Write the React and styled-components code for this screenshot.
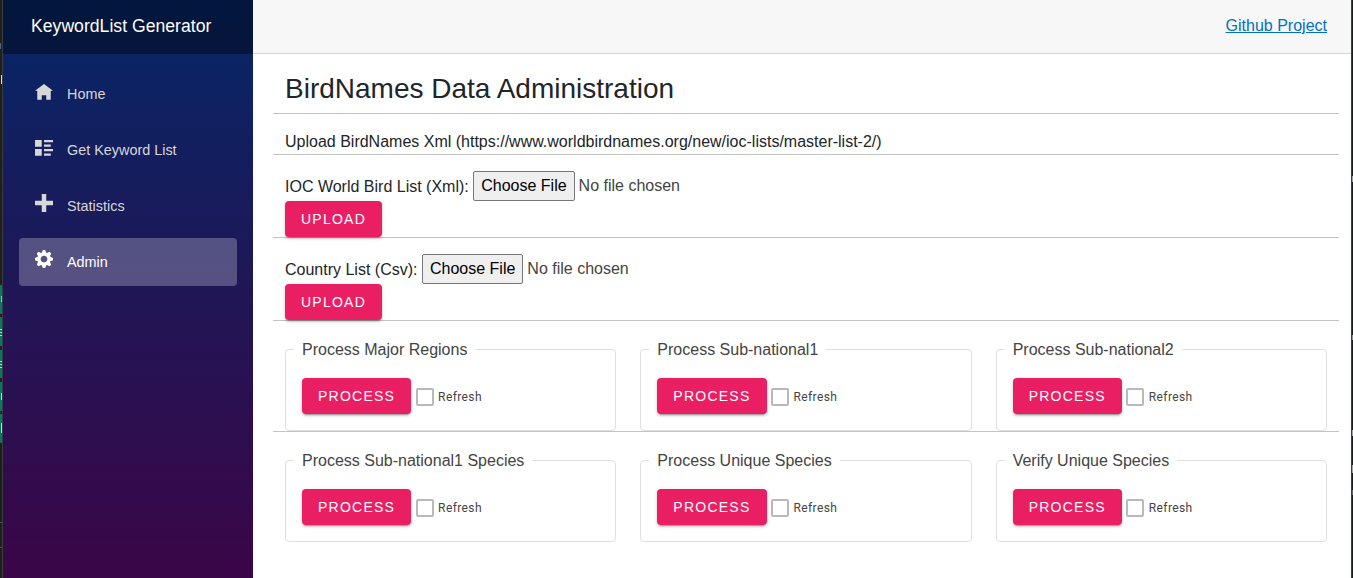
import React from "react";
import styled, { createGlobalStyle } from "styled-components";

const GlobalStyle = createGlobalStyle`
  *, *::before, *::after { box-sizing: border-box; }
  html, body { margin: 0; padding: 0; overflow: hidden; }
  body {
    font-family: "Liberation Sans", Arial, sans-serif;
    font-size: 16px;
    line-height: 24px;
    color: #212529;
    background: #fff;
  }
`;

const Page = styled.div`
  display: flex;
  height: 578px;
  width: 100%;
`;

const LeftEdge = styled.div`
  flex: 0 0 3px;
  border-right: 1px solid #3c3c3c;
  background:
    linear-gradient(
      90deg, transparent 1px, rgba(220, 220, 220, 0.7) 1px
    ) 0 296px / 2px 6px no-repeat,
    linear-gradient(#bcd5d1, #bcd5d1) 0 329px / 2px 1px no-repeat,
    linear-gradient(#bcd5d1, #bcd5d1) 0 332px / 2px 1px no-repeat,
    linear-gradient(#bcd5d1, #bcd5d1) 0 335px / 2px 1px no-repeat,
    linear-gradient(#bcd5d1, #bcd5d1) 0 361px / 2px 1px no-repeat,
    linear-gradient(#bcd5d1, #bcd5d1) 0 364px / 2px 1px no-repeat,
    linear-gradient(#bcd5d1, #bcd5d1) 0 367px / 2px 1px no-repeat,
    linear-gradient(#bcd5d1, #bcd5d1) 1px 393px / 1px 7px no-repeat,
    linear-gradient(#bcd5d1, #bcd5d1) 1px 423px / 1px 10px no-repeat,
    linear-gradient(#44688a, #44688a) 0 43px / 1px 6px no-repeat,
    linear-gradient(#d8d8d8, #d8d8d8) 1px 75px / 1px 9px no-repeat,
    linear-gradient(
      #1e1e1e 285px, #04786a 285px 314px, #1e1e1e 314px 317px,
      #04786a 317px 346px, #1e1e1e 346px 350px, #04786a 350px 378px,
      #1e1e1e 378px 382px, #04786a 382px 411px, #1e1e1e 411px 414px,
      #04786a 414px 443px, #1e1e1e 443px 522px, #4c5563 522px 523px,
      #1e1e1e 523px 547px, #4c5563 547px 548px, #1e1e1e 548px
    );
`;

const RightEdge = styled.div`
  flex: 0 0 2px;
  border-left: 1px solid #3a3d3d;
  background: linear-gradient(
    #1a1d1e 176px, #9a9a9a 176px 182px, #1a1d1e 182px 335px,
    #8f8f8f 335px 340px, #1a1d1e 340px 430px, #a0a0a0 430px 436px,
    #1a1d1e 436px 465px, #a0a0a0 465px 473px, #1a1d1e 473px 490px,
    #666 490px 495px, #1a1d1e 495px
  );
`;

const Sidebar = styled.aside`
  flex: 0 0 250px;
  background: linear-gradient(180deg, rgb(5, 39, 103) 0, #3a0647 570px);
`;

const Brand = styled.div`
  height: 54px;
  padding: 14px 28px 0;
  background: rgba(0, 0, 0, 0.4);
  color: #fff;
  font-size: 17.6px;
  letter-spacing: 0.02px;
  white-space: nowrap;
`;

const Nav = styled.nav`
  display: flex;
  flex-direction: column;
  gap: 8px;
  padding: 16px 16px 0;
`;

const NavItem = styled.a`
  display: flex;
  height: 48px;
  padding: 0 16px;
  border-radius: 4px;
  font-size: 14.4px;
  line-height: 48px;
  text-decoration: none;
  color: ${(p) => (p.$active ? "#fff" : "#d7d7d7")};
  background: ${(p) => (p.$active ? "rgba(255, 255, 255, 0.25)" : "transparent")};
`;

const NavIcon = styled.svg`
  width: 18px;
  height: 18px;
  margin: 12px 14px 0 0;
  fill: currentColor;
`;

const Main = styled.main`
  flex: 1;
  min-width: 0;
`;

const TopBar = styled.header`
  display: flex;
  justify-content: flex-end;
  height: 54px;
  padding: 14px 24px 0;
  background: #f7f7f7;
  border-bottom: 1px solid #d6d5d5;
`;

const TopLink = styled.a`
  color: #0071c1;
  text-decoration: underline;
`;

const Content = styled.div`
  padding: 0 12px 0 20px;
`;

const Row = styled.section`
  height: ${(p) => p.$height}px;
  padding: ${(p) => p.$top || 0}px 12px 0;
  border-bottom: 1px solid #c4c4c4;
`;

const Title = styled.h3`
  margin: 0;
  font-size: 28px;
  line-height: 34px;
  font-weight: 400;
`;

const FileLine = styled.div`
  display: flex;
  height: 30px;
  line-height: 30px;
  white-space: pre;
`;

const FileLabel = styled.span`
  line-height: 32px;
`;

const FileButton = styled.button`
  height: 30px;
  margin: 0 4px 0 4.5px;
  padding: 0 7px;
  border: 1px solid #767676;
  border-radius: 2px;
  background: #efefef;
  color: #000;
  font: inherit;
  line-height: 28px;
`;

const FileStatus = styled.span`
  color: #444;
`;

const ActionButton = styled.button`
  display: block;
  height: 36px;
  padding: 0 16px;
  border: 0;
  border-radius: 4px;
  background: #e91e63;
  color: #fff;
  font-family: inherit;
  font-size: 14px;
  letter-spacing: 1.25px;
  text-transform: uppercase;
  box-shadow: 0 3px 1px -2px rgba(0, 0, 0, 0.2), 0 2px 2px rgba(0, 0, 0, 0.14),
    0 1px 5px rgba(0, 0, 0, 0.12);
`;

const Cards = styled.section`
  display: grid;
  grid-template-columns: repeat(3, 1fr);
  column-gap: 24px;
  height: 111px;
  padding: 15px 12px 0;
  border-bottom: ${(p) => (p.$last ? "none" : "1px solid #c4c4c4")};
`;

const Card = styled.fieldset`
  min-width: 0;
  height: 95px;
  margin: 0;
  padding: 0 8px;
  border: 1px solid #e0e0e0;
  border-radius: 4px;
`;

const Legend = styled.legend`
  padding: 2px 8px 0;
  color: #444;
`;

const CardBody = styled.div`
  display: flex;
  align-items: center;
  padding: 16px 8px 0;
`;

const CheckLabel = styled.label`
  display: flex;
  align-items: center;
  margin-left: 4.6px;
  gap: 4.3px;
  color: #444;
  font: 12px/20px Roboto, sans-serif;
  letter-spacing: 0.4px;
`;

const CheckText = styled.span`
  padding-top: 2px;
`;

const CheckBox = styled.input`
  appearance: none;
  width: 18px;
  height: 18px;
  margin: 1px 0 0;
  border: 2px solid #b9b9b9;
  border-radius: 2px;
`;

const icons = {
  home: "M4 .9l-4 3h1v4h2v-2h2v2h2v-4.03l1 .03-4-3z",
  list: "M0 .9v3h3v-3h-3zm4 0v1h4v-1h-4zm0 2v1h3v-1h-3zm-4 2v3h3v-3h-3zm4 0v1h4v-1h-4zm0 2v1h3v-1h-3z",
  plus: "M3 0v3h-3v2h3v3h2v-3h3v-2h-3v-3h-2z",
  cog: "M3.5 0l-.5 1.190-.31.13-1.19-.5-.69.69.5 1.19-.13.31-1.19.5v1l1.19.5.13.31-.5 1.19.69.69 1.19-.5.31.13.5 1.19h1l.5-1.19.31-.13 1.19.5.69-.69-.5-1.19.13-.31 1.19-.5v-1l-1.19-.5-.13-.31.5-1.19-.69-.69-1.19.5-.31-.13-.5-1.19h-1zm.5 2.5c.83 0 1.5.67 1.5 1.5s-.67 1.5-1.5 1.5-1.5-.67-1.5-1.5.67-1.5 1.5-1.5z",
};

const links = [
  { icon: "home", label: "Home" },
  { icon: "list", label: "Get Keyword List" },
  { icon: "plus", label: "Statistics" },
  { icon: "cog", label: "Admin", active: true },
];

function ProcessCard({ title }) {
  return (
    <Card>
      <Legend>{title}</Legend>
      <CardBody>
        <ActionButton>Process</ActionButton>
        <CheckLabel>
          <CheckBox type="checkbox" />
          <CheckText>Refresh</CheckText>
        </CheckLabel>
      </CardBody>
    </Card>
  );
}

function FileUpload({ label }) {
  return (
    <Row $height={83} $top={16}>
      <FileLine>
        <FileLabel>{label}</FileLabel>
        <FileButton>Choose File</FileButton>
        <FileStatus>No file chosen</FileStatus>
      </FileLine>
      <ActionButton>Upload</ActionButton>
    </Row>
  );
}

export default function App() {
  return (
    <>
      <GlobalStyle />
      <Page>
        <LeftEdge />
        <Sidebar>
          <Brand>KeywordList Generator</Brand>
          <Nav>
            {links.map((l) => (
              <NavItem key={l.label} $active={l.active}>
                <NavIcon viewBox="0 0 8 8">
                  <path d={icons[l.icon]} />
                </NavIcon>
                {l.label}
              </NavItem>
            ))}
          </Nav>
        </Sidebar>
        <Main>
          <TopBar>
            <TopLink>Github Project</TopLink>
          </TopBar>
          <Content>
            <Row $height={60} $top={18}>
              <Title>BirdNames Data Administration</Title>
            </Row>
            <Row $height={41} $top={16}>
              Upload BirdNames Xml (https://www.worldbirdnames.org/new/ioc-lists/master-list-2/)
            </Row>
            <FileUpload label="IOC World Bird List (Xml):" />
            <FileUpload label="Country List (Csv):" />
            <Cards>
              <ProcessCard title="Process Major Regions" />
              <ProcessCard title="Process Sub-national1" />
              <ProcessCard title="Process Sub-national2" />
            </Cards>
            <Cards $last>
              <ProcessCard title="Process Sub-national1 Species" />
              <ProcessCard title="Process Unique Species" />
              <ProcessCard title="Verify Unique Species" />
            </Cards>
          </Content>
        </Main>
        <RightEdge />
      </Page>
    </>
  );
}
